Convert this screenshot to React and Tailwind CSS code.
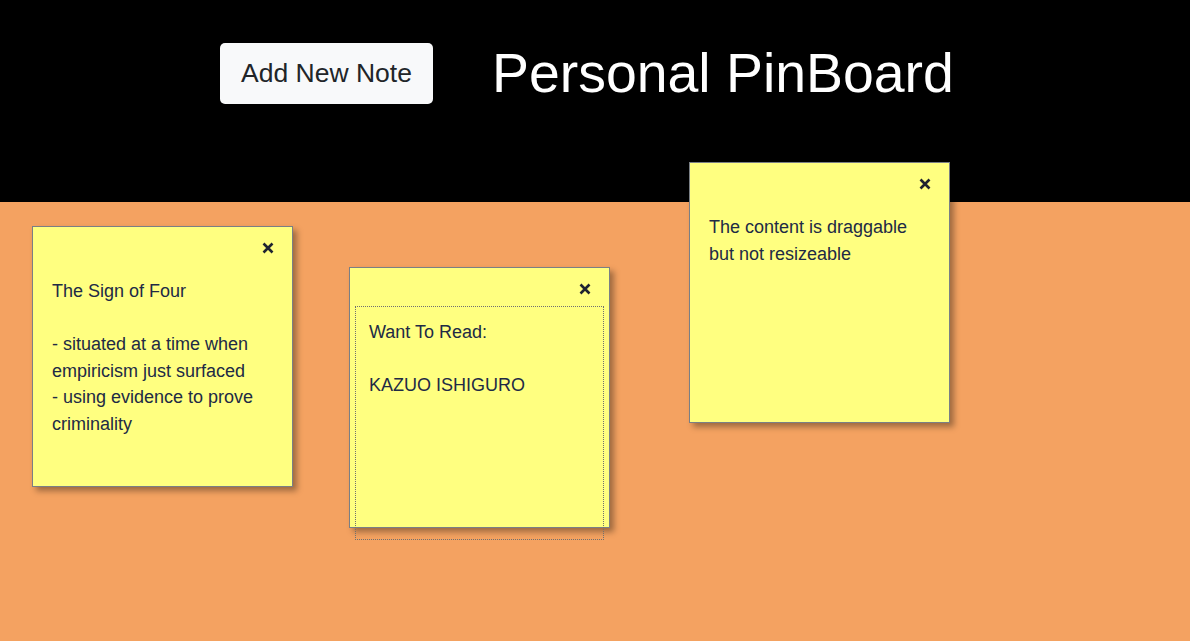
import React from "react";

function CloseIcon() {
  return (
    <svg width="12" height="12" viewBox="0 0 12 12" className="absolute top-[15px] right-[18px]">
      <path d="M1.5 1.5 L10.5 10.5 M10.5 1.5 L1.5 10.5" stroke="#1f2430" strokeWidth="2.6" strokeLinecap="butt" />
    </svg>
  );
}

function Note({ left, top, focused, children }) {
  return (
    <div
      className="absolute w-[261px] h-[261px] bg-[#ffff80] border border-[#7a7f85] shadow-[4px_4px_6px_rgba(0,0,0,0.35)]"
      style={{ left, top }}
    >
      <CloseIcon />
      <div
        className={
          "absolute left-[5px] top-[38px] w-[249px] h-[234px] pt-[12px] pl-[13px] pr-[10px] text-[18px] leading-[26.6px] text-[#212a45] whitespace-pre-line " +
          (focused ? "border border-dotted border-[#707070]" : "border border-transparent")
        }
      >
        {children}
      </div>
    </div>
  );
}

export default function App() {
  return (
    <div className="relative w-full min-h-[641px] bg-[#f4a261] font-['Liberation_Sans',Arial,sans-serif] overflow-hidden">
      <header className="h-[202px] bg-black flex items-start pt-[43px] pl-[220px]">
        <button className="h-[61px] w-[213px] rounded-[5px] bg-[#f8f9fa] text-[26.5px] text-[#212529] flex items-center justify-center">
          Add New Note
        </button>
        <h1 className="ml-[59px] text-[55.4px] leading-[61px] text-white font-normal">Personal PinBoard</h1>
      </header>

      <Note left={32} top={226}>
        {"The Sign of Four\n\n- situated at a time when empiricism just surfaced\n- using evidence to prove criminality"}
      </Note>
      <Note left={349} top={267} focused>
        {"Want To Read:\n\nKAZUO ISHIGURO"}
      </Note>
      <Note left={689} top={162}>
        {"The content is draggable but not resizeable"}
      </Note>
    </div>
  );
}
